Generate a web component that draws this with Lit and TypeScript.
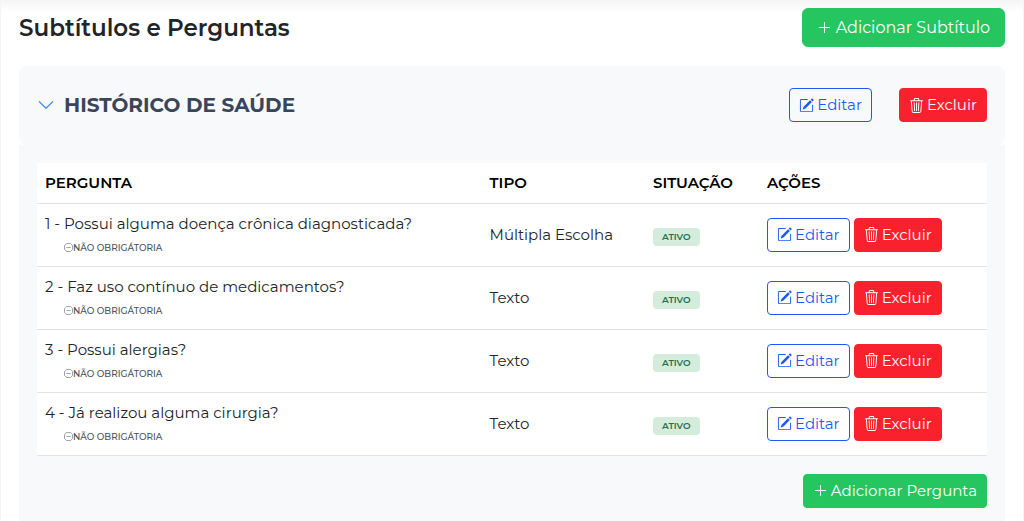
import { LitElement, html, css } from "lit";
import { customElement, state } from "lit/decorators.js";

interface Pergunta {
  numero: number;
  texto: string;
  tipo: string;
}

const plusIcon = html`<svg class="icon" viewBox="0 0 16 16" fill="currentColor" aria-hidden="true">
  <path fill-rule="evenodd" d="M8 2a.5.5 0 0 1 .5.5v5h5a.5.5 0 0 1 0 1h-5v5a.5.5 0 0 1-1 0v-5h-5a.5.5 0 0 1 0-1h5v-5A.5.5 0 0 1 8 2"/>
</svg>`;

const editIcon = html`<svg class="icon" viewBox="0 0 16 16" fill="currentColor" aria-hidden="true">
  <path d="M15.502 1.94a.5.5 0 0 1 0 .706L14.459 3.69l-2-2L13.502.646a.5.5 0 0 1 .707 0l1.293 1.293zm-1.75 2.456-2-2L4.939 9.21a.5.5 0 0 0-.121.196l-.805 2.414a.25.25 0 0 0 .316.316l2.414-.805a.5.5 0 0 0 .196-.12z"/>
  <path fill-rule="evenodd" d="M1 13.5A1.5 1.5 0 0 0 2.5 15h11a1.5 1.5 0 0 0 1.5-1.5v-6a.5.5 0 0 0-1 0v6a.5.5 0 0 1-.5.5h-11a.5.5 0 0 1-.5-.5v-11a.5.5 0 0 1 .5-.5H9a.5.5 0 0 0 0-1H2.5A1.5 1.5 0 0 0 1 2.5z"/>
</svg>`;

const trashIcon = html`<svg class="icon" viewBox="0 0 16 16" fill="currentColor" aria-hidden="true">
  <path d="M6.5 1h3a.5.5 0 0 1 .5.5v1H6v-1a.5.5 0 0 1 .5-.5M11 2.5v-1A1.5 1.5 0 0 0 9.5 0h-3A1.5 1.5 0 0 0 5 1.5v1H1.5a.5.5 0 0 0 0 1h.538l.853 10.66A2 2 0 0 0 4.885 16h6.23a2 2 0 0 0 1.994-1.84l.853-10.66h.538a.5.5 0 0 0 0-1zm1.958 1-.846 10.58a1 1 0 0 1-.997.92h-6.23a1 1 0 0 1-.997-.92L3.042 3.5zm-7.487 1a.5.5 0 0 1 .528.47l.5 8.5a.5.5 0 0 1-.998.06L5 5.03a.5.5 0 0 1 .47-.53Zm5.058 0a.5.5 0 0 1 .47.53l-.5 8.5a.5.5 0 1 1-.998-.06l.5-8.5a.5.5 0 0 1 .528-.47M8 4.5a.5.5 0 0 1 .5.5v8.5a.5.5 0 0 1-1 0V5a.5.5 0 0 1 .5-.5"/>
</svg>`;

const chevronIcon = html`<svg class="chevron" viewBox="0 0 16 16" fill="currentColor" aria-hidden="true">
  <path fill-rule="evenodd" d="M1.646 4.646a.5.5 0 0 1 .708 0L8 10.293l5.646-5.647a.5.5 0 0 1 .708.708l-6 6a.5.5 0 0 1-.708 0l-6-6a.5.5 0 0 1 0-.708"/>
</svg>`;

const dashIcon = html`<svg class="dash" viewBox="0 0 16 16" fill="currentColor" aria-hidden="true">
  <path d="M8 15A7 7 0 1 1 8 1a7 7 0 0 1 0 14m0 1A8 8 0 1 0 8 0a8 8 0 0 0 0 16"/>
  <path d="M4 8a.5.5 0 0 1 .5-.5h7a.5.5 0 0 1 0 1h-7A.5.5 0 0 1 4 8"/>
</svg>`;

@customElement("app-root")
export class AppRoot extends LitElement {
  @state() private aberto = true;

  private perguntas: Pergunta[] = [
    { numero: 1, texto: "Possui alguma doença crônica diagnosticada?", tipo: "Múltipla Escolha" },
    { numero: 2, texto: "Faz uso contínuo de medicamentos?", tipo: "Texto" },
    { numero: 3, texto: "Possui alergias?", tipo: "Texto" },
    { numero: 4, texto: "Já realizou alguma cirurgia?", tipo: "Texto" },
  ];

  static styles = css`
    :host {
      display: block;
      font-family: Montserrat, Inter, sans-serif;
      font-size: 15px;
      line-height: 24px;
      color: #212529;
    }
    * {
      box-sizing: border-box;
    }
    .page {
      display: flex;
      flex-direction: column;
      min-height: 100vh;
      padding: 8px 18px 0;
      border: solid #f3f4f5;
      border-width: 0 1px;
      background: linear-gradient(#f5f5f6, #fff 12px) #fff;
    }
    .top {
      display: flex;
      align-items: center;
      justify-content: space-between;
      margin-bottom: 19px;
    }
    .title {
      margin: 0;
      font-size: 23px;
      font-weight: 600;
      line-height: 28px;
    }
    .btn {
      display: inline-flex;
      align-items: center;
      gap: 3px;
      height: 34px;
      padding: 0 9px;
      border: 1px solid;
      border-radius: 4px;
      font: inherit;
      font-weight: 400;
      white-space: nowrap;
      cursor: pointer;
    }
    .large {
      gap: 4px;
      height: 39px;
      padding: 0 14px;
      border-radius: 6px;
      font-size: 16px;
    }
    .green {
      background: #25c55f;
      border-color: #25c55f;
      color: #fff;
    }
    .blue {
      background: transparent;
      border-color: #1f59f5;
      color: #1f59f5;
    }
    .red {
      background: #f9212e;
      border-color: #f9212e;
      color: #fff;
    }
    .icon {
      width: 15px;
      height: 15px;
    }
    .section-head {
      display: flex;
      align-items: center;
      justify-content: space-between;
      padding: 22px 18px 23px;
      border-radius: 8px;
      background: #f7f9fb;
    }
    .toggle {
      display: flex;
      align-items: center;
      gap: 9px;
      padding: 0;
      border: 0;
      background: none;
      font: inherit;
      font-size: 20px;
      font-weight: 700;
      color: #3a4658;
      cursor: pointer;
    }
    .chevron {
      width: 18px;
      height: 18px;
      color: #2f7bff;
    }
    .heading {
      margin: 0;
      font-size: 20px;
    }
    .head-actions {
      display: flex;
      gap: 27px;
    }
    .section-body {
      flex: 1;
      padding: 18px 18px 13px;
      background: #f7f9fb;
    }
    .table {
      width: 100%;
      border-collapse: collapse;
      table-layout: fixed;
      background: #fff;
    }
    .c-pergunta {
      width: 46.8%;
    }
    .c-tipo {
      width: 17.2%;
    }
    .c-situacao {
      width: 12%;
    }
    th,
    td {
      padding: 0 8px;
      border-bottom: 1px solid #dee2e6;
      text-align: left;
      vertical-align: middle;
    }
    th {
      height: 40px;
      font-weight: 600;
      color: #000;
    }
    td {
      height: 63px;
    }
    .question {
      display: block;
    }
    .note {
      display: flex;
      align-items: center;
      margin-top: 2px;
      padding-left: 19px;
      font-size: 9px;
      font-weight: 500;
      line-height: 20px;
      color: #495057;
    }
    .dash {
      width: 9px;
      height: 9px;
    }
    .badge {
      display: inline-block;
      padding: 0 9px;
      border-radius: 4px;
      background: #d3ecdb;
      color: #2c6e3f;
      font-size: 9px;
      font-weight: 600;
      line-height: 18px;
    }
    .actions {
      display: flex;
      gap: 4px;
    }
    .foot {
      display: flex;
      justify-content: flex-end;
      padding-top: 18px;
    }
  `;

  private editar() {
    return html`<button class="btn blue" type="button">${editIcon}Editar</button>`;
  }

  private excluir() {
    return html`<button class="btn red" type="button">${trashIcon}Excluir</button>`;
  }

  private corpo() {
    return html`
      <div class="section-body">
        <table class="table">
          <colgroup>
            <col class="c-pergunta" />
            <col class="c-tipo" />
            <col class="c-situacao" />
            <col />
          </colgroup>
          <thead>
            <tr>
              <th scope="col">PERGUNTA</th>
              <th scope="col">TIPO</th>
              <th scope="col">SITUAÇÃO</th>
              <th scope="col">AÇÕES</th>
            </tr>
          </thead>
          <tbody>
            ${this.perguntas.map(
              (p) => html`
                <tr>
                  <td>
                    <span class="question">${p.numero} - ${p.texto}</span>
                    <span class="note">${dashIcon}NÃO OBRIGÁTORIA</span>
                  </td>
                  <td>${p.tipo}</td>
                  <td><span class="badge">ATIVO</span></td>
                  <td><div class="actions">${this.editar()}${this.excluir()}</div></td>
                </tr>
              `
            )}
          </tbody>
        </table>
        <div class="foot">
          <button class="btn green" type="button">${plusIcon}Adicionar Pergunta</button>
        </div>
      </div>
    `;
  }

  render() {
    return html`
      <main class="page">
        <header class="top">
          <h1 class="title">Subtítulos e Perguntas</h1>
          <button class="btn green large" type="button">${plusIcon}Adicionar Subtítulo</button>
        </header>
        <div class="section-head">
          <h2 class="heading">
            <button
              class="toggle"
              type="button"
              aria-expanded=${this.aberto ? "true" : "false"}
              @click=${() => (this.aberto = !this.aberto)}
            >
              ${chevronIcon}HISTÓRICO DE SAÚDE
            </button>
          </h2>
          <div class="head-actions">${this.editar()}${this.excluir()}</div>
        </div>
        ${this.aberto ? this.corpo() : null}
      </main>
    `;
  }
}
